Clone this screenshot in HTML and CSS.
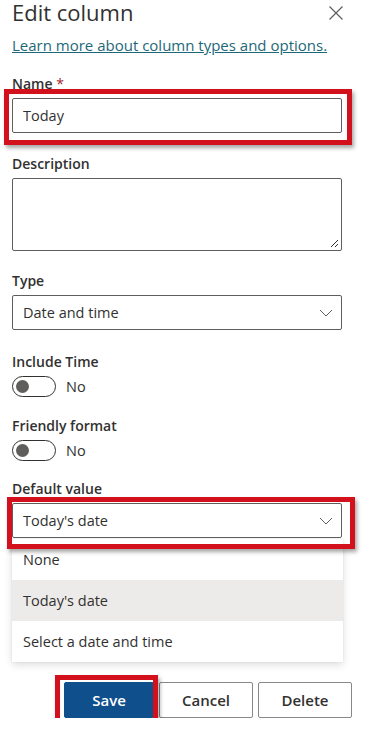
FILE: index.html
```html
<!DOCTYPE html>
<html lang="en">
<head>
    <meta charset="UTF-8">
    <meta name="viewport" content="width=device-width, initial-scale=1.0">
    <title>Edit column</title>
    <link rel="stylesheet" href="styles.css">
</head>
<body>

    <div id="edit-panel">
        <div class="panel-header">
            <h1>Edit column</h1>
            <button class="close-btn" aria-label="Close">
                <svg width="16" height="16" viewBox="0 0 16 16"><path d="M1.5 1.5 L14.5 14.5 M14.5 1.5 L1.5 14.5" stroke="#605e5c" stroke-width="1.2" fill="none"/></svg>
            </button>
        </div>

        <a class="learn-link" href="#">Learn more about column types and options.</a>

        <div class="field field-name">
            <label class="field-label">Name <span class="required">*</span></label>
            <div class="highlight highlight-name">
                <input class="text-input" type="text" value="Today">
            </div>
        </div>

        <div class="field">
            <label class="field-label">Description</label>
            <div class="textarea-box">
                <svg class="grip" width="10" height="10" viewBox="0 0 10 10"><path d="M9 2 L2 9 M9 6 L6 9" stroke="#323130" stroke-width="1" fill="none"/></svg>
            </div>
        </div>

        <div class="field field-type">
            <label class="field-label">Type</label>
            <div class="select-box">
                <span>Date and time</span>
                <svg class="chevron" width="14" height="8" viewBox="0 0 14 8"><path d="M1 1 L7 7 L13 1" stroke="#605e5c" stroke-width="1" fill="none"/></svg>
            </div>
        </div>

        <div class="field field-toggle field-include">
            <label class="field-label">Include Time</label>
            <div class="toggle-row">
                <span class="toggle"><span class="knob"></span></span>
                <span class="toggle-text">No</span>
            </div>
        </div>

        <div class="field field-toggle">
            <label class="field-label">Friendly format</label>
            <div class="toggle-row">
                <span class="toggle"><span class="knob"></span></span>
                <span class="toggle-text">No</span>
            </div>
        </div>

        <div class="field field-default">
            <label class="field-label">Default value</label>
            <div class="highlight highlight-default">
                <div class="select-box">
                    <span>Today's date</span>
                    <svg class="chevron" width="14" height="8" viewBox="0 0 14 8"><path d="M1 1 L7 7 L13 1" stroke="#605e5c" stroke-width="1" fill="none"/></svg>
                </div>
            </div>
            <ul class="dropdown-list">
                <li>None</li>
                <li class="selected">Today's date</li>
                <li>Select a date and time</li>
            </ul>
        </div>

        <div class="button-row">
            <div class="highlight highlight-save">
                <button class="btn btn-primary">Save</button>
            </div>
            <button class="btn">Cancel</button>
            <button class="btn">Delete</button>
        </div>
    </div>

</body>
</html>
```

FILE: styles.css
```css
body {
    font-family: "Open Sans", "Noto Sans", sans-serif;
    margin: 0;
    padding: 0;
    background-color: #fff;
    color: #323130;
}

#edit-panel {
    width: 330px;
    padding: 0 27px 0 12px;
}

.panel-header {
    display: flex;
    justify-content: space-between;
    align-items: center;
    height: 25px;
}

h1 {
    margin: 0;
    font-size: 22px;
    font-weight: 400;
    line-height: 25px;
    color: #323130;
}

.close-btn {
    background: none;
    border: none;
    padding: 0;
    margin-right: -2px;
    width: 16px;
    height: 16px;
    display: flex;
}

.learn-link {
    display: block;
    margin-top: 9px;
    font-size: 15px;
    line-height: 22px;
    color: #1d6878;
    text-decoration: underline;
}

.field {
    margin-top: 21px;
}

.field-name {
    margin-top: 18px;
}

.field-type {
    margin-top: 20px;
}

.field-toggle {
    margin-top: 19px;
}

.field-include {
    margin-top: 22px;
}

.field-default {
    margin-top: 18px;
}

.field-label {
    display: block;
    font-size: 14px;
    font-weight: 600;
    line-height: 20px;
    margin-bottom: 4px;
}

.required {
    color: #a4262c;
    font-weight: 400;
}

.text-input,
.select-box {
    box-sizing: border-box;
    width: 330px;
    height: 35px;
    border: 1px solid #605e5c;
    border-radius: 2px;
    padding: 0 10px;
    font-family: inherit;
    font-size: 14.5px;
    color: #323130;
    background: #fff;
}

.select-box {
    display: flex;
    align-items: center;
    justify-content: space-between;
}

.chevron {
    margin-right: -2px;
}

.textarea-box {
    box-sizing: border-box;
    position: relative;
    width: 330px;
    height: 73px;
    border: 1px solid #605e5c;
    border-radius: 2px;
}

.grip {
    position: absolute;
    right: 2px;
    bottom: 2px;
}

.toggle-row {
    display: flex;
    align-items: center;
    gap: 10px;
}

.toggle {
    box-sizing: border-box;
    width: 44px;
    height: 21px;
    border: 1px solid #323130;
    border-radius: 11px;
    display: flex;
    align-items: center;
    padding-left: 3px;
}

.knob {
    width: 13px;
    height: 13px;
    border-radius: 50%;
    background: #605e5c;
}

.toggle-text {
    font-size: 14.5px;
}

/* red annotation boxes drawn over the screenshot */
.highlight {
    position: relative;
}

.highlight::after {
    content: "";
    position: absolute;
    border: 5px solid #d3111c;
    box-shadow: 2px 3px 4px rgba(0, 0, 0, 0.35);
    pointer-events: none;
}

.highlight-name::after {
    left: -8px;
    top: -9px;
    right: -10px;
    bottom: -12px;
}

.highlight-default::after {
    left: -5px;
    top: -6px;
    right: -13px;
    bottom: -11px;
}

.highlight-save::after {
    left: -9px;
    top: -7px;
    right: -4px;
    bottom: -6px;
}

.dropdown-list {
    list-style: none;
    margin: 1px 0 0;
    padding: 0;
    width: 331px;
    background: #fff;
    box-shadow: 0 3px 8px rgba(0, 0, 0, 0.13), 0 0 2px rgba(0, 0, 0, 0.08);
}

.dropdown-list li {
    height: 41px;
    line-height: 41px;
    padding-left: 11px;
    font-size: 14.5px;
}

.dropdown-list li.selected {
    background: #edebe9;
}

.button-row {
    display: flex;
    justify-content: flex-end;
    gap: 5px;
    margin-top: 20px;
    margin-right: -10px;
}

.btn {
    box-sizing: border-box;
    height: 36px;
    width: 94px;
    border: 1px solid #8a8886;
    border-radius: 2px;
    background: #fff;
    font-family: inherit;
    font-size: 15px;
    font-weight: 600;
    color: #323130;
}

.btn-primary {
    width: 90px;
    background: #0f4f8c;
    border-color: #0f4f8c;
    color: #fff;
}
```
